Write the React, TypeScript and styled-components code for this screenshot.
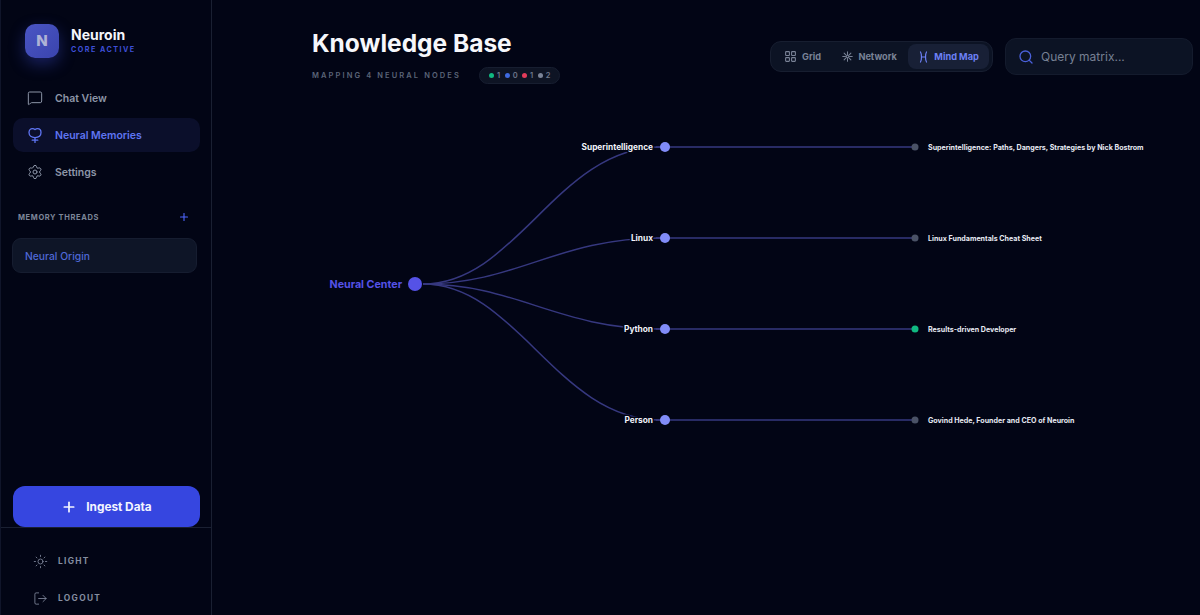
import * as React from "react";
import styled, { createGlobalStyle } from "styled-components";
import { LayoutGrid, LogOut, MessageSquare, Plus, Search, Settings, Sun } from "lucide-react";

const Global = createGlobalStyle`
html, body, #root {
  margin: 0;
  padding: 0;
  height: 100%;
  overflow: hidden;
  background: #020515;
  font-family: Inter, "Liberation Sans", sans-serif;
  box-sizing: border-box;
}
*, *::before, *::after { box-sizing: inherit; }
`;

const Shell = styled.div`
  display: flex;
  width: 1200px;
  height: 615px;
  background: #020515;
`;

const Sidebar = styled.aside`
  width: 212px;
  height: 615px;
  flex: none;
  display: flex;
  flex-direction: column;
  border-right: 1px solid #1a2032;
  border-left: 1px solid #10152a;
`;

const Brand = styled.div`
  display: flex;
  align-items: center;
  gap: 12px;
  padding-left: 24px;
  height: 81px;
`;

const Logo = styled.div`
  width: 34px;
  height: 34px;
  border-radius: 10px;
  background: linear-gradient(135deg, #4a55c4, #3a44ad);
  box-shadow: 0 6px 16px rgba(60, 75, 210, 0.4);
  color: #aeb3d6;
  font-weight: 800;
  font-size: 15px;
  display: flex;
  align-items: center;
  justify-content: center;
`;

const BrandText = styled.div`
  display: flex;
  flex-direction: column;
  gap: 2px;
`;

const BrandName = styled.div`
  color: #f4f6fb;
  font-size: 14px;
  font-weight: 700;
  line-height: 17px;
`;

const BrandStatus = styled.div`
  color: #3e50d8;
  font-size: 7.2px;
  font-weight: 700;
  letter-spacing: 1.45px;
  line-height: 10px;
`;

const Nav = styled.nav`
  display: flex;
  flex-direction: column;
  gap: 3px;
  padding: 0 11px 0 12px;
`;

const NavItem = styled.div<{ $active?: boolean }>`
  display: flex;
  align-items: center;
  gap: 12px;
  height: 34px;
  padding-left: 14px;
  border-radius: 10px;
  font-size: 10.5px;
  font-weight: 600;
  color: ${(p) => (p.$active ? "#5f75f2" : "#8d96a8")};
  background: ${(p) => (p.$active ? "#0b0f2b" : "transparent")};
`;

const ThreadsHead = styled.div`
  display: flex;
  align-items: center;
  justify-content: space-between;
  margin-top: 21px;
  padding: 0 21px 0 17px;
  height: 14px;
  color: #7d8699;
  font-size: 7.5px;
  font-weight: 700;
  letter-spacing: 0.62px;
`;

const AddThread = styled.span`
  display: flex;
  color: #4f66ff;
`;

const ThreadCard = styled.div`
  margin: 14px 14px 0 11px;
  height: 35px;
  display: flex;
  align-items: center;
  padding-left: 12px;
  border-radius: 9px;
  background: #0e1527;
  border: 1px solid #161d30;
  color: #4f68d6;
  font-size: 10.3px;
  font-weight: 500;
`;

const Spacer = styled.div`
  flex: 1;
`;

const IngestWrap = styled.div`
  padding: 0 11px 0 12px;
  border-bottom: 1px solid #1a2032;
`;

const IngestButton = styled.button`
  width: 100%;
  height: 41px;
  border: none;
  border-radius: 12px;
  background: #3646e0;
  color: #f3f5ff;
  font-family: inherit;
  font-size: 11.8px;
  font-weight: 700;
  display: flex;
  align-items: center;
  justify-content: center;
  gap: 9px;
`;

const FootNav = styled.div`
  display: flex;
  flex-direction: column;
  gap: 9px;
  padding: 19px 0 0 32px;
  height: 87px;
`;

const FootItem = styled.div`
  display: flex;
  align-items: center;
  gap: 10px;
  height: 28px;
  color: #858ea1;
  font-size: 8.4px;
  font-weight: 700;
  letter-spacing: 1.3px;
`;

const Main = styled.main`
  flex: 1;
  min-width: 0;
  display: flex;
  flex-direction: column;
`;

const Header = styled.header`
  display: flex;
  justify-content: space-between;
  height: 105px;
  padding: 27px 7px 0 100px;
`;

const TitleBlock = styled.div`
  display: flex;
  flex-direction: column;
`;

const Title = styled.h1`
  margin: 0;
  color: #f6f7fb;
  font-size: 24.5px;
  line-height: 32px;
  font-weight: 700;
`;

const SubRow = styled.div`
  display: flex;
  align-items: center;
  gap: 18px;
  margin-top: 8px;
`;

const SubText = styled.div`
  color: #5b6478;
  font-size: 7.5px;
  font-weight: 600;
  letter-spacing: 2.1px;
`;

const Counts = styled.div`
  display: flex;
  align-items: center;
  gap: 4.5px;
  height: 17px;
  padding: 0 9px;
  border-radius: 9px;
  background: #0e1424;
  border: 1px solid #171e30;
`;

const Count = styled.span<{ $color: string }>`
  display: flex;
  align-items: center;
  gap: 3px;
  color: #6f788c;
  font-size: 7.5px;
  font-weight: 600;
  &::before {
    content: "";
    width: 5px;
    height: 5px;
    border-radius: 50%;
    background: ${(p) => p.$color};
  }
`;

const Controls = styled.div`
  display: flex;
  align-items: flex-start;
  gap: 12px;
  padding-top: 11px;
`;

const Tabs = styled.div`
  display: flex;
  align-items: center;
  gap: 2px;
  width: 223px;
  height: 31px;
  margin-top: 3px;
  padding: 0 3px;
  border-radius: 11px;
  background: #0c1324;
  border: 1px solid #171e30;
`;

const Tab = styled.div<{ $active?: boolean; $width: number }>`
  display: flex;
  align-items: center;
  justify-content: center;
  gap: 5px;
  width: ${(p) => p.$width}px;
  height: 25px;
  border-radius: 8px;
  font-size: 9.2px;
  font-weight: 700;
  color: ${(p) => (p.$active ? "#6d80f5" : "#798296")};
  background: ${(p) => (p.$active ? "#182036" : "transparent")};
`;

const SearchBox = styled.div`
  display: flex;
  align-items: center;
  gap: 7px;
  width: 188px;
  height: 37px;
  padding-left: 12px;
  border-radius: 11px;
  background: #0c1324;
  border: 1px solid #141b2d;
  color: #778093;
  font-size: 12px;
`;

const MapArea = styled.div`
  flex: 1;
  min-height: 0;
`;

const MapSvg = styled.svg`
  display: block;
  font-family: Inter, "Liberation Sans", sans-serif;
`;

const BranchLabel = styled.text`
  fill: #f1f3fa;
  font-size: 8.3px;
  font-weight: 700;
  text-anchor: end;
  dominant-baseline: central;
`;

const LeafLabel = styled.text`
  fill: #e6e9f2;
  font-size: 7.1px;
  font-weight: 700;
  dominant-baseline: central;
`;

const CenterLabel = styled.text`
  fill: #5552e6;
  font-size: 10.7px;
  font-weight: 700;
  text-anchor: end;
  dominant-baseline: central;
`;

// ring with a small notch on top and a cross below, the memories icon
const MemoryIcon = () => (
  <svg width="16" height="16" viewBox="0 0 16 16" fill="none" stroke="#5f75f2" strokeWidth="1.3" strokeLinecap="round" strokeLinejoin="round">
    <path d="M8 10.6C4.6 10.6 2 8.8 2 5.6 2 3.2 3.6 1.6 5.4 1.6c1.1 0 2 .4 2.6 1 .6-.6 1.5-1 2.6-1 1.8 0 3.4 1.6 3.4 4 0 3.2-2.6 5-6 5Z" />
    <path d="M8 10.6V15.6M5.2 13.2h5.6" />
  </svg>
);

const NetworkIcon = () => (
  <svg width="11" height="11" viewBox="0 0 12 12" fill="none" stroke="#798296" strokeWidth="1.1" strokeLinecap="round">
    <circle cx="6" cy="6" r="1.4" />
    <path d="M6 .8v3M6 8.2v3M.8 6h3M8.2 6h3M2.3 2.3l2.1 2.1M7.6 7.6l2.1 2.1M9.7 2.3 7.6 4.4M4.4 7.6 2.3 9.7" />
  </svg>
);

const MindMapIcon = () => (
  <svg width="11" height="12" viewBox="0 0 11 12" fill="none" stroke="#6d80f5" strokeWidth="1.2" strokeLinecap="round">
    <path d="M2.5 1C3.8 3 3.8 9 2.5 11M8.5 1C7.2 3 7.2 9 8.5 11M3.4 6h4.2" />
  </svg>
);

const branches = [
  { label: "Superintelligence", y: 42, leaf: "Superintelligence: Paths, Dangers, Strategies by Nick Bostrom", leafColor: "#4a5266" },
  { label: "Linux", y: 133, leaf: "Linux Fundamentals Cheat Sheet", leafColor: "#4a5266" },
  { label: "Python", y: 224, leaf: "Results-driven Developer", leafColor: "#10b981" },
  { label: "Person", y: 315, leaf: "Govind Hede, Founder and CEO of Neuroin", leafColor: "#4a5266" },
];

const centerY = 179;

const MindMap = () => (
  <MapSvg width="988" height="510" viewBox="0 0 988 510">
    {branches.map((b) => (
      <g key={b.label}>
        <path
          d={`M211 ${centerY} C 305 ${centerY}, 345 ${b.y}, 449 ${b.y}`}
          fill="none"
          stroke="#36387f"
          strokeWidth="1.5"
        />
        <path d={`M444 ${b.y} H703`} fill="none" stroke="#36387f" strokeWidth="1.5" />
      </g>
    ))}
    <CenterLabel x="190" y={centerY}>Neural Center</CenterLabel>
    <circle cx="203" cy={centerY} r="7" fill="#5552e6" />
    {branches.map((b) => (
      <g key={b.leaf}>
        <BranchLabel x="441" y={b.y} stroke="#020515" strokeWidth="3" paintOrder="stroke">{b.label}</BranchLabel>
        <circle cx="453" cy={b.y} r="5" fill="#818cf8" />
        <circle cx="703" cy={b.y} r="3.5" fill={b.leafColor} />
        <LeafLabel x="716" y={b.y}>{b.leaf}</LeafLabel>
      </g>
    ))}
  </MapSvg>
);

export default function App() {
  return (
    <Shell>
      <Global />
      <Sidebar>
        <Brand>
          <Logo>N</Logo>
          <BrandText>
            <BrandName>Neuroin</BrandName>
            <BrandStatus>CORE ACTIVE</BrandStatus>
          </BrandText>
        </Brand>
        <Nav>
          <NavItem><MessageSquare size={16} strokeWidth={1.5} />Chat View</NavItem>
          <NavItem $active><MemoryIcon />Neural Memories</NavItem>
          <NavItem><Settings size={16} strokeWidth={1.5} />Settings</NavItem>
        </Nav>
        <ThreadsHead>
          MEMORY THREADS
          <AddThread><Plus size={12} strokeWidth={2.2} /></AddThread>
        </ThreadsHead>
        <ThreadCard>Neural Origin</ThreadCard>
        <Spacer />
        <IngestWrap>
          <IngestButton><Plus size={16} strokeWidth={2.6} />Ingest Data</IngestButton>
        </IngestWrap>
        <FootNav>
          <FootItem><Sun size={15} strokeWidth={1.3} />LIGHT</FootItem>
          <FootItem><LogOut size={15} strokeWidth={1.3} />LOGOUT</FootItem>
        </FootNav>
      </Sidebar>
      <Main>
        <Header>
          <TitleBlock>
            <Title>Knowledge Base</Title>
            <SubRow>
              <SubText>MAPPING 4 NEURAL NODES</SubText>
              <Counts>
                <Count $color="#10b981">1</Count>
                <Count $color="#3f6ae0">0</Count>
                <Count $color="#e23b5a">1</Count>
                <Count $color="#7b8498">2</Count>
              </Counts>
            </SubRow>
          </TitleBlock>
          <Controls>
            <Tabs>
              <Tab $width={58}><LayoutGrid size={13} />Grid</Tab>
              <Tab $width={74}><NetworkIcon />Network</Tab>
              <Tab $active $width={82}><MindMapIcon />Mind Map</Tab>
            </Tabs>
            <SearchBox><Search size={16} color="#4a60da" />Query matrix...</SearchBox>
          </Controls>
        </Header>
        <MapArea>
          <MindMap />
        </MapArea>
      </Main>
    </Shell>
  );
}
